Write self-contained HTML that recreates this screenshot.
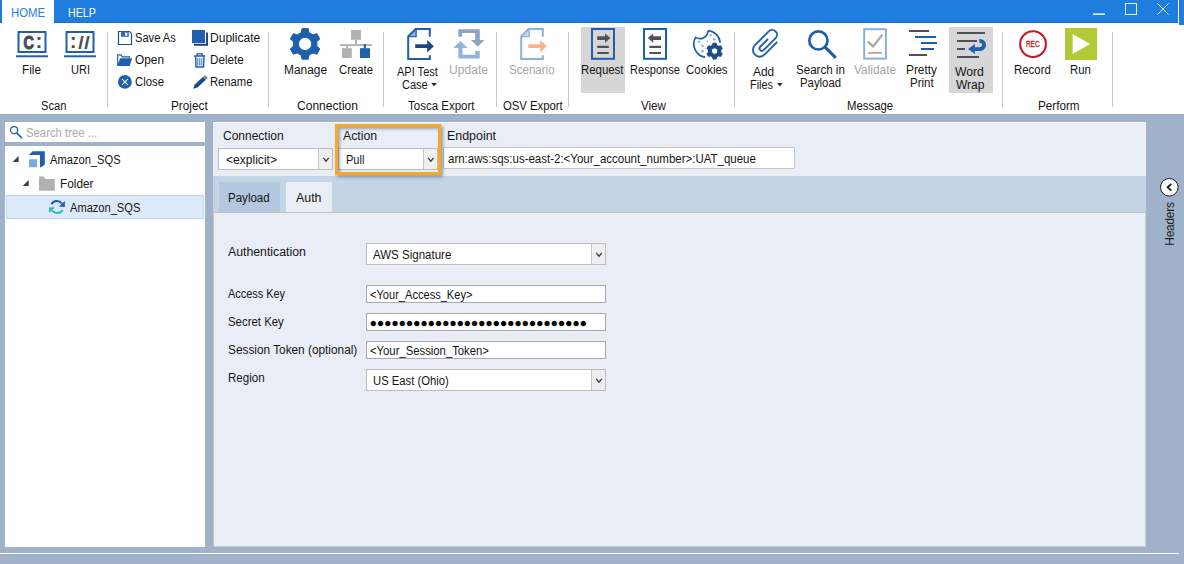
<!DOCTYPE html>
<html lang="en"><head><meta charset="utf-8"><title>API Scan</title>
<style>
html,body{margin:0;padding:0;}
body{width:1184px;height:564px;overflow:hidden;background:#a0b2c9;position:relative;font-family:"Liberation Sans",sans-serif;}
.abs{position:absolute;}
.t{position:absolute;white-space:pre;line-height:16px;font-family:"Liberation Sans",sans-serif;transform-origin:0 0;}
.box{position:absolute;box-sizing:border-box;}
.inp{position:absolute;box-sizing:border-box;background:#fff;border:1px solid #abadb3;}
.cbtn{position:absolute;box-sizing:border-box;background:#efefef;border-left:1px solid #c4c4c4;top:0;bottom:0;right:0;width:14px;}
.combo{border-color:#bdbdbd;}
svg{position:absolute;left:0;top:0;}
</style></head>
<body>
<div id="window-chrome">
<div class="box" style="left:0px;top:0px;width:1184px;height:23px;background:#1f7ddd;"></div>
<div class="box" style="left:0px;top:22px;width:1184px;height:1px;background:#1873d8;"></div>
<div class="box" style="left:2px;top:0px;width:52px;height:23px;background:#ffffff;"></div>
<div class="box" style="left:0px;top:23px;width:1184px;height:91px;background:#ffffff;"></div>
<div class="box" style="left:1179px;top:0px;width:5px;height:25px;background:#1f7ddd;"></div>
<div class="box" style="left:1178px;top:0px;width:1px;height:25px;background:#ffffff;"></div>
<div class="box" style="left:107px;top:32px;width:1px;height:75px;background:#c8c8c8;"></div>
<div class="box" style="left:268px;top:32px;width:1px;height:75px;background:#c8c8c8;"></div>
<div class="box" style="left:383px;top:32px;width:1px;height:75px;background:#c8c8c8;"></div>
<div class="box" style="left:496px;top:32px;width:1px;height:75px;background:#c8c8c8;"></div>
<div class="box" style="left:568px;top:32px;width:1px;height:75px;background:#c8c8c8;"></div>
<div class="box" style="left:734px;top:32px;width:1px;height:75px;background:#c8c8c8;"></div>
<div class="box" style="left:1002px;top:32px;width:1px;height:75px;background:#c8c8c8;"></div>
<div class="box" style="left:1112px;top:32px;width:1px;height:75px;background:#c8c8c8;"></div>
<div class="box" style="left:581px;top:27px;width:44px;height:66px;background:#d6d6d6;"></div>
<div class="box" style="left:949px;top:27px;width:44px;height:66px;background:#d6d6d6;"></div>
<div class="box" style="left:0px;top:114px;width:1184px;height:1px;background:#98abc5;"></div>
<div class="box" style="left:5px;top:122px;width:200px;height:20px;background:#ffffff;"></div>
<div class="box" style="left:5px;top:146px;width:200px;height:401px;background:#ffffff;"></div>
<div class="box" style="left:6px;top:195px;width:198px;height:24px;background:#dce9f9;border:1px solid #bcd5f2;"></div>
<div class="box" style="left:213px;top:122px;width:933px;height:425px;background:#e8edf6;"></div>
<div class="box" style="left:213px;top:122px;width:933px;height:1px;background:#f1f4fa;"></div>
<div class="box" style="left:1145px;top:122px;width:1px;height:54px;background:#f1f4fa;"></div>
<div class="box" style="left:213px;top:176px;width:933px;height:36px;background:#c3d4e7;"></div>
<div class="box" style="left:213px;top:212px;width:933px;height:335px;background:#e8edf6;border-left:1px solid #c2c2c2;border-top:1px solid #c2c2c2;border-bottom:1px solid #c6c6c6;border-right:1px solid #c4cfdf;"></div>
<div class="box" style="left:219px;top:182px;width:61px;height:30px;background:#b3c7df;"></div>
<div class="box" style="left:286px;top:182px;width:46px;height:30px;background:#e8edf6;"></div>
<div class="box" style="left:0px;top:553px;width:1179px;height:1px;background:#ffffff;"></div>
<div class="inp combo" style="left:218px;top:148px;width:115px;height:22px;"><div class="cbtn"></div></div>
<div class="inp combo" style="left:338px;top:148px;width:100px;height:22px;"><div class="cbtn"></div></div>
<div class="inp" style="left:443px;top:147px;width:352px;height:22px;border-color:#c3c3c3;border-radius:1px;"></div>
<div class="inp combo" style="left:366px;top:243px;width:240px;height:22px;"><div class="cbtn"></div></div>
<div class="inp" style="left:366px;top:285px;width:240px;height:18px;"></div>
<div class="inp" style="left:366px;top:313px;width:240px;height:18px;"></div>
<div class="inp" style="left:366px;top:341px;width:240px;height:18px;"></div>
<div class="inp combo" style="left:366px;top:369px;width:240px;height:22px;"><div class="cbtn"></div></div>
<div class="box" style="left:335px;top:124px;width:106px;height:51px;background:transparent;border:3px solid #f9a825;box-shadow:2px 2px 3px rgba(0,0,0,0.35), inset 2px 2px 3px rgba(60,70,90,0.45);"></div>
</div>
<svg id="icons" width="1184" height="564" viewBox="0 0 1184 564" aria-hidden="true">
<rect x="1093" y="13.3" width="12" height="1.7" fill="#dbe9fa"/>
<rect x="1125.5" y="3.5" width="11" height="11" stroke="#e6f0fc" stroke-width="1" fill="none"/>
<path d="M1157.5 3.5 L1168.5 14.5 M1168.5 3.5 L1157.5 14.5" stroke="#e6f0fc" stroke-width="1" fill="none"/>
<rect x="18.5" y="32" width="27" height="20" fill="none" stroke="#1f5fae" stroke-width="2"/>
<rect x="16" y="55.3" width="32" height="2" fill="#1f5fae"/>
<text transform="translate(23.4,49.4) scale(0.76,1)" font-family="Liberation Sans, sans-serif" font-weight="bold" font-size="19" fill="#4a4e54" stroke="#4a4e54" stroke-width="1.1">C</text>
<text transform="translate(35.6,47.6)" font-family="Liberation Sans, sans-serif" font-weight="bold" font-size="20.6" fill="#4a4e54">:</text>
<rect x="66.5" y="32" width="27" height="20" fill="none" stroke="#1f5fae" stroke-width="2"/>
<rect x="64" y="55.3" width="32" height="2" fill="#1f5fae"/>
<text transform="translate(69.8,47.6)" font-family="Liberation Sans, sans-serif" font-weight="bold" font-size="20.6" fill="#4a4e54">:</text>
<text transform="translate(78.2,49) scale(1.12,1)" font-family="Liberation Sans, sans-serif" font-weight="bold" font-size="17.6" fill="#4a4e54" stroke="#4a4e54" stroke-width="0.1" letter-spacing="0.5">//</text>
<path d="M118.5 31.5 H129.6 L131.5 33.4 V44.5 H118.5 Z" fill="#fff" stroke="#1d5196" stroke-width="1.2"/>
<rect x="121" y="31.4" width="7.8" height="5.4" fill="#2d6bbd"/>
<rect x="125.2" y="32.6" width="2.1" height="3.2" fill="#fff"/>
<path d="M117.7 65.6 V54.9 H121 L122.3 56.9 H129.5 V58.6" fill="none" stroke="#1f5fae" stroke-width="1.2"/>
<path d="M120.2 58.3 H132.1 L129.7 65.9 H117.1 Z" fill="#1f5fae"/>
<circle cx="124.9" cy="81.9" r="6.9" fill="#1f5fae"/>
<path d="M122 79 L127.9 84.9 M127.9 79 L122 84.9" stroke="#fff" stroke-width="1.05" fill="none"/>
<path d="M194 44.8 H207 V32.4" fill="none" stroke="#1b3f78" stroke-width="1.9"/>
<rect x="192" y="30" width="13" height="13" fill="#1f5fae"/>
<path d="M194 56 H205.3 M197 55.6 V53.8 H202.2 V55.6" fill="none" stroke="#1f5fae" stroke-width="1.3"/>
<path d="M195.7 56.5 L196 67 H203.6 L203.9 56.5" fill="none" stroke="#1f5fae" stroke-width="1.4"/>
<path d="M197.8 58.2 V65.6 M199.8 58.2 V65.6 M201.8 58.2 V65.6" fill="none" stroke="#1f5fae" stroke-width="0.9"/>
<path d="M193.2 88.8 L194.7 84.6 L203.1 76.8 L205.9 79.8 L197.5 87.6 Z" fill="#1c4b8c"/>
<path d="M203.1 76.8 L205.1 74.9 L207.9 77.9 L205.9 79.8 Z" fill="#8c8c8c"/>
<path d="M301.27 32.53 L302.02 28.61 L308.18 28.61 L308.93 32.53 L313.04 34.90 L316.80 33.58 L319.89 38.92 L316.86 41.53 L316.86 46.27 L319.89 48.88 L316.80 54.22 L313.04 52.90 L308.93 55.27 L308.18 59.19 L302.02 59.19 L301.27 55.27 L297.16 52.90 L293.40 54.22 L290.31 48.88 L293.34 46.27 L293.34 41.53 L290.31 38.92 L293.40 33.58 L297.16 34.90 Z M298.50 43.90 a6.6 6.6 0 1 0 13.2 0 a6.6 6.6 0 1 0 -13.2 0 Z" fill="#1f5fae" fill-rule="evenodd" stroke="#1f5fae" stroke-width="1" stroke-linejoin="round"/>
<rect x="351" y="30" width="10" height="9.8" fill="#b1b3b2"/>
<rect x="355" y="39.5" width="2" height="5" fill="#b1b3b2"/>
<rect x="340" y="44.1" width="32" height="1.9" fill="#b1b3b2"/>
<rect x="346.2" y="45.5" width="1.8" height="3" fill="#b1b3b2"/>
<rect x="342" y="48.2" width="9.8" height="9.8" fill="#b1b3b2"/>
<rect x="363.8" y="44.1" width="2.1" height="4.5" fill="#1f5fae"/>
<rect x="360" y="48.2" width="10" height="9.8" fill="#1f5fae"/>
<path d="M408.2 36.5 L415.79999999999995 28.6 V36.5 Z" fill="#8db4e2"/>
<path d="M429.8 36.7 V29 H415.59999999999997 L408.2 36.3 V58.9 H429.8 V55.2" fill="none" stroke="#1f5fae" stroke-width="2" stroke-linejoin="miter"/>
<path d="M408.2 36.6 H416.09999999999997 V28.6" fill="none" stroke="#1f5fae" stroke-width="1.4"/>
<path d="M415.2 44.3 H427.2 V40 L433.9 46.2 L427.2 52.4 V48.1 H415.2 Z" fill="#1a4a85"/>
<path d="M458.3 29.2 H479.8 V40 H484.5 L477.7 46.8 L470.9 40 H475.2 V33.1 H462.1 V36.7 H458.3 Z" fill="#8ca5c5"/>
<path d="M479.8 58.6 H458.3 V48.1 H453.2 L460.4 40.9 L467.6 48.1 H462.5 V54.8 H475.2 V50.9 H479.8 Z" fill="#8fb4e0"/>
<path d="M521.2 36.5 L528.8000000000001 28.6 V36.5 Z" fill="#c6d9f0"/>
<path d="M542.8000000000001 36.7 V29 H528.6000000000001 L521.2 36.3 V58.9 H542.8000000000001 V55.2" fill="none" stroke="#8fb0dd" stroke-width="2" stroke-linejoin="miter"/>
<path d="M521.2 36.6 H529.1000000000001 V28.6" fill="none" stroke="#8fb0dd" stroke-width="1.4"/>
<path d="M528.2 44.3 H540.2 V40 L546.9000000000001 46.2 L540.2 52.4 V48.1 H528.2 Z" fill="#f9b48c"/>
<rect x="592" y="29" width="22" height="29.8" fill="none" stroke="#1f5fae" stroke-width="2"/>
<path d="M597.2 36.2 H605 V33.5 L610.4 38.1 L605 42.7 V39.9 H597.2 Z" fill="#4f5156"/>
<path d="M597.2 46.9 H608.8 M597.2 53 H608.8" stroke="#4f5156" stroke-width="2.1" fill="none"/>
<rect x="644" y="29" width="22" height="29.8" fill="none" stroke="#1f5fae" stroke-width="2"/>
<path d="M661 36.2 H653.2 V33.5 L647.8 38.1 L653.2 42.7 V39.9 H661 Z" fill="#4f5156"/>
<path d="M649.4 46.9 H661 M649.4 53 H661" stroke="#4f5156" stroke-width="2.1" fill="none"/>
<path d="M708 30.7 A13.3 13.3 0 0 1 720.2 42.6 M705.2 57.2 A13.3 13.3 0 0 1 695.6 37.4 A8.1 8.1 0 0 0 708 30.7" fill="none" stroke="#1f5fae" stroke-width="1.7"/>
<circle cx="710.6" cy="35.1" r="1.2" fill="#8db4e2"/>
<circle cx="714.1" cy="39.3" r="1.3" fill="#8db4e2"/>
<circle cx="707.5" cy="41.4" r="0.8" fill="#8db4e2"/>
<circle cx="698.9" cy="41.8" r="1.2" fill="#8db4e2"/>
<circle cx="702.5" cy="45.8" r="1.3" fill="#8db4e2"/>
<circle cx="702.5" cy="51.2" r="1.3" fill="#8db4e2"/>
<circle cx="705.6" cy="48.3" r="0.6" fill="#8db4e2"/>
<path d="M712.59 45.13 L713.00 43.16 L716.20 43.16 L716.61 45.13 L718.77 46.37 L720.68 45.74 L722.28 48.52 L720.78 49.85 L720.78 52.35 L722.28 53.68 L720.68 56.46 L718.77 55.83 L716.61 57.07 L716.20 59.04 L713.00 59.04 L712.59 57.07 L710.43 55.83 L708.52 56.46 L706.92 53.68 L708.42 52.35 L708.42 49.85 L706.92 48.52 L708.52 45.74 L710.43 46.37 Z M711.30 51.10 a3.3 3.3 0 1 0 6.6 0 a3.3 3.3 0 1 0 -6.6 0 Z" fill="#1a4a85" fill-rule="evenodd" stroke="#1a4a85" stroke-width="1" stroke-linejoin="round"/>
<path d="M777.26 41.94 L764.50 54.70 A6.76 6.76 0 0 1 754.93 45.13 L768.73 31.34 A4.85 4.85 0 0 1 775.59 38.20 L763.64 50.14 A2.41 2.41 0 0 1 760.24 46.73 L767.95 39.02" fill="none" stroke="#1f5fae" stroke-width="1.9" stroke-linecap="butt"/>
<circle cx="818.4" cy="40.4" r="9.1" fill="none" stroke="#1f5fae" stroke-width="2.7"/>
<path d="M825.2 47.2 L835.8 57.8" stroke="#1f5fae" stroke-width="3.1" fill="none"/>
<rect x="864.2" y="29.2" width="21.7" height="29.4" fill="none" stroke="#8cb0dc" stroke-width="2"/>
<path d="M867.8 41.4 L873 46.4 L882.6 34.6" fill="none" stroke="#ababab" stroke-width="2.4"/>
<path d="M868.1 52.9 H881.9" stroke="#ababab" stroke-width="1.8" fill="none"/>
<path d="M908.9 31 H929.1 M908.9 55 H927" stroke="#4f5156" stroke-width="1.9" fill="none"/>
<path d="M915 37 H936.1 M920.9 43 H937 M920.9 49 H934" stroke="#1f5fae" stroke-width="1.9" fill="none"/>
<path d="M957 33 H985 M957 41 H977 M957 49 H965 M957 57 H979" stroke="#4f5156" stroke-width="2" fill="none"/>
<path d="M979.3 40.9 H980 A4.1 4.1 0 0 1 980 49.1 H974.5" fill="none" stroke="#1f5fae" stroke-width="3.9"/>
<path d="M968.1 48.9 L974.9 44.1 V54.1 Z" fill="#1f5fae"/>
<circle cx="1033.05" cy="44.1" r="12.9" fill="#fff" stroke="#c9151e" stroke-width="2.1"/>
<text x="1032.8" y="46.9" text-anchor="middle" font-family="Liberation Sans, sans-serif" font-size="8.5" fill="#c9151e" stroke="#c9151e" stroke-width="0.3" textLength="13.8" lengthAdjust="spacingAndGlyphs">REC</text>
<rect x="1065" y="28" width="32" height="32" fill="#b1c934"/>
<path d="M1072.7 33.9 L1090.2 44 L1072.7 54.1 Z" fill="#fff"/>
<circle cx="14.1" cy="130.1" r="3.6" fill="none" stroke="#1f5fae" stroke-width="1.25"/>
<path d="M16.5 132.7 L21.9 138.1" stroke="#1f5fae" stroke-width="1.6" fill="none"/>
<path d="M18.6 156 V161.9 H12.5 Z" fill="#3f3f3f"/>
<path d="M28.7 180 V185.9 H22.6 Z" fill="#3f3f3f"/>
<path d="M29 155 L32.6 151.2 H44.8 V164.4 L41 167.2 H40 V155 Z" fill="#1f5fae"/>
<rect x="29" y="159.2" width="8" height="8" fill="#7aa9e2"/>
<path d="M39 176.5 H43.6 L45.2 178.9 H54.8 V190.8 H39 Z" fill="#b1b1b1"/>
<path d="M51.5 204.2 A6.3 6.3 0 0 1 61.8 203.4" fill="none" stroke="#1f5fae" stroke-width="2"/>
<path d="M64.9 200.9 V206.9 L58.9 206.5 Z" fill="#1f5fae"/>
<path d="M62.6 209.9 A6.3 6.3 0 0 1 52.2 210.6" fill="none" stroke="#2bb5c3" stroke-width="2"/>
<path d="M49 213.1 V207.2 L55 207.5 Z" fill="#2bb5c3"/>
<path d="M323.2 157.9 L326 161.1 L328.8 157.9" fill="none" stroke="#3d3d3d" stroke-width="1.35"/>
<path d="M428.0 157.9 L430.8 161.1 L433.6 157.9" fill="none" stroke="#3d3d3d" stroke-width="1.35"/>
<path d="M596.2 252.9 L599 256.1 L601.8 252.9" fill="none" stroke="#3d3d3d" stroke-width="1.35"/>
<path d="M596.2 378.90000000000003 L599 382.1 L601.8 378.90000000000003" fill="none" stroke="#3d3d3d" stroke-width="1.35"/>
<circle cx="1169.3" cy="187.3" r="8.8" fill="#fff" stroke="#1e1e1e" stroke-width="1"/>
<path d="M1171.3 184 L1167.6 187.3 L1171.3 190.6" fill="none" stroke="#1e1e1e" stroke-width="1.8"/>
<path d="M431.2 82.9 H436.8 L434 86.5 Z" fill="#2b2b2b"/>
<path d="M777 82.9 H782.6 L779.8 86.5 Z" fill="#2b2b2b"/>
</svg>
<div id="labels">
<span class="t" id="t0" style="left:11.00px;top:5.00px;font-size:12px;color:#2b7de0;transform:scaleX(0.9481);">HOME</span>
<span class="t" id="t1" style="left:68.00px;top:5.00px;font-size:12px;color:#ffffff;transform:scaleX(0.8878);">HELP</span>
<span class="t" id="t2" style="left:22.00px;top:62.00px;font-size:12px;color:#151515;transform:scaleX(0.9791);">File</span>
<span class="t" id="t3" style="left:71.00px;top:62.00px;font-size:12px;color:#151515;transform:scaleX(0.9194);">URI</span>
<span class="t" id="t4" style="left:135.00px;top:30.00px;font-size:12px;color:#151515;transform:scaleX(0.9282);">Save As</span>
<span class="t" id="t5" style="left:135.00px;top:52.00px;font-size:12px;color:#151515;transform:scaleX(0.9900);">Open</span>
<span class="t" id="t6" style="left:135.00px;top:74.00px;font-size:12px;color:#151515;transform:scaleX(0.9466);">Close</span>
<span class="t" id="t7" style="left:210.00px;top:30.00px;font-size:12px;color:#151515;transform:scaleX(1.0039);">Duplicate</span>
<span class="t" id="t8" style="left:210.00px;top:52.00px;font-size:12px;color:#151515;transform:scaleX(0.9742);">Delete</span>
<span class="t" id="t9" style="left:210.00px;top:74.00px;font-size:12px;color:#151515;transform:scaleX(0.9359);">Rename</span>
<span class="t" id="t10" style="left:284.00px;top:62.00px;font-size:12px;color:#151515;transform:scaleX(0.9932);">Manage</span>
<span class="t" id="t11" style="left:339.00px;top:62.00px;font-size:12px;color:#151515;transform:scaleX(0.9450);">Create</span>
<span class="t" id="t12" style="left:397.00px;top:64.00px;font-size:12px;color:#151515;transform:scaleX(0.9182);">API Test</span>
<span class="t" id="t13" style="left:402.00px;top:77.00px;font-size:12px;color:#151515;transform:scaleX(0.9189);">Case</span>
<span class="t" id="t14" style="left:449.00px;top:62.00px;font-size:12px;color:#a6a6a6;transform:scaleX(1.0094);">Update</span>
<span class="t" id="t15" style="left:509.00px;top:62.00px;font-size:12px;color:#a6a6a6;transform:scaleX(0.9627);">Scenario</span>
<span class="t" id="t16" style="left:581.00px;top:62.00px;font-size:12px;color:#151515;transform:scaleX(0.9494);">Request</span>
<span class="t" id="t17" style="left:630.00px;top:62.00px;font-size:12px;color:#151515;transform:scaleX(0.9239);">Response</span>
<span class="t" id="t18" style="left:686.00px;top:62.00px;font-size:12px;color:#151515;transform:scaleX(0.9597);">Cookies</span>
<span class="t" id="t19" style="left:753.00px;top:64.00px;font-size:12px;color:#151515;transform:scaleX(0.9926);">Add</span>
<span class="t" id="t20" style="left:750.00px;top:77.00px;font-size:12px;color:#151515;transform:scaleX(0.9078);">Files</span>
<span class="t" id="t21" style="left:796.00px;top:62.00px;font-size:12px;color:#151515;transform:scaleX(0.9627);">Search in</span>
<span class="t" id="t22" style="left:800.00px;top:75.00px;font-size:12px;color:#151515;transform:scaleX(0.9455);">Payload</span>
<span class="t" id="t23" style="left:854.00px;top:62.00px;font-size:12px;color:#a6a6a6;transform:scaleX(0.9897);">Validate</span>
<span class="t" id="t24" style="left:906.00px;top:62.00px;font-size:12px;color:#151515;transform:scaleX(0.9891);">Pretty</span>
<span class="t" id="t25" style="left:910.00px;top:75.00px;font-size:12px;color:#151515;transform:scaleX(0.9580);">Print</span>
<span class="t" id="t26" style="left:955.00px;top:64.00px;font-size:12px;color:#151515;transform:scaleX(1.0151);">Word</span>
<span class="t" id="t27" style="left:956.00px;top:77.00px;font-size:12px;color:#151515;transform:scaleX(0.9983);">Wrap</span>
<span class="t" id="t28" style="left:1014.00px;top:62.00px;font-size:12px;color:#151515;transform:scaleX(0.9513);">Record</span>
<span class="t" id="t29" style="left:1070.00px;top:62.00px;font-size:12px;color:#151515;transform:scaleX(0.9482);">Run</span>
<span class="t" id="t30" style="left:41.00px;top:98.00px;font-size:12px;color:#151515;transform:scaleX(0.9279);">Scan</span>
<span class="t" id="t31" style="left:171.00px;top:98.00px;font-size:12px;color:#151515;transform:scaleX(0.9828);">Project</span>
<span class="t" id="t32" style="left:297.00px;top:98.00px;font-size:12px;color:#151515;transform:scaleX(1.0050);">Connection</span>
<span class="t" id="t33" style="left:408.00px;top:98.00px;font-size:12px;color:#151515;transform:scaleX(0.9582);">Tosca Export</span>
<span class="t" id="t34" style="left:503.00px;top:98.00px;font-size:12px;color:#151515;transform:scaleX(0.9428);">OSV Export</span>
<span class="t" id="t35" style="left:641.00px;top:98.00px;font-size:12px;color:#151515;transform:scaleX(0.9647);">View</span>
<span class="t" id="t36" style="left:847.00px;top:98.00px;font-size:12px;color:#151515;transform:scaleX(0.9470);">Message</span>
<span class="t" id="t37" style="left:1038.00px;top:98.00px;font-size:12px;color:#151515;transform:scaleX(0.9745);">Perform</span>
<span class="t" id="t38" style="left:26.00px;top:125.00px;font-size:12px;color:#a9a9a9;transform:scaleX(0.9445);">Search tree ...</span>
<span class="t" id="t39" style="left:50.00px;top:152.00px;font-size:12px;color:#151515;transform:scaleX(0.9294);">Amazon_SQS</span>
<span class="t" id="t40" style="left:60.00px;top:176.00px;font-size:12px;color:#151515;transform:scaleX(0.9825);">Folder</span>
<span class="t" id="t41" style="left:70.00px;top:200.00px;font-size:12px;color:#151515;transform:scaleX(0.9244);">Amazon_SQS</span>
<span class="t" id="t42" style="left:223.00px;top:128.00px;font-size:12px;color:#151515;transform:scaleX(0.9986);">Connection</span>
<span class="t" id="t43" style="left:343.00px;top:128.00px;font-size:12px;color:#151515;transform:scaleX(1.0261);">Action</span>
<span class="t" id="t44" style="left:447.00px;top:128.00px;font-size:12px;color:#151515;transform:scaleX(1.0355);">Endpoint</span>
<span class="t" id="t45" style="left:226.00px;top:152.00px;font-size:12px;color:#151515;transform:scaleX(1.0058);">&lt;explicit&gt;</span>
<span class="t" id="t46" style="left:346.00px;top:152.00px;font-size:12px;color:#151515;transform:scaleX(0.9186);">Pull</span>
<span class="t" id="t47" style="left:448.00px;top:151.00px;font-size:12px;color:#151515;transform:scaleX(0.9575);">arn:aws:sqs:us-east-2:&lt;Your_account_number&gt;:UAT_queue</span>
<span class="t" id="t48" style="left:228.00px;top:190.00px;font-size:12px;color:#151515;transform:scaleX(0.9612);">Payload</span>
<span class="t" id="t49" style="left:296.00px;top:190.00px;font-size:12px;color:#151515;transform:scaleX(1.0314);">Auth</span>
<span class="t" id="t50" style="left:228.00px;top:244.00px;font-size:12px;color:#151515;transform:scaleX(1.0243);">Authentication</span>
<span class="t" id="t51" style="left:228.00px;top:286.00px;font-size:12px;color:#151515;transform:scaleX(0.9094);">Access Key</span>
<span class="t" id="t52" style="left:228.00px;top:314.00px;font-size:12px;color:#151515;transform:scaleX(0.9503);">Secret Key</span>
<span class="t" id="t53" style="left:228.00px;top:342.00px;font-size:12px;color:#151515;transform:scaleX(0.9854);">Session Token (optional)</span>
<span class="t" id="t54" style="left:228.00px;top:370.00px;font-size:12px;color:#151515;transform:scaleX(0.9640);">Region</span>
<span class="t" id="t55" style="left:373.00px;top:247.00px;font-size:12px;color:#151515;transform:scaleX(0.9595);">AWS Signature</span>
<span class="t" id="t56" style="left:370.00px;top:287.00px;font-size:12px;color:#151515;transform:scaleX(0.9230);">&lt;Your_Access_Key&gt;</span>
<span class="t" id="t57" style="left:370.00px;top:343.00px;font-size:12px;color:#151515;transform:scaleX(0.9412);">&lt;Your_Session_Token&gt;</span>
<span class="t" id="t58" style="left:373.00px;top:373.00px;font-size:12px;color:#151515;transform:scaleX(0.9385);">US East (Ohio)</span>
<span class="t" id="dots" style="left:369.5px;top:315px;font-size:12.5px;letter-spacing:-0.31px;color:#000;line-height:16px;">●●●●●●●●●●●●●●●●●●●●●●●●●●●●●●</span>
<span class="t" id="hdr" style="left:1148.2px;top:216.3px;width:44px;height:16px;text-align:center;font-size:12px;letter-spacing:-0.3px;color:#1e1e1e;transform:rotate(-90deg);transform-origin:center;">Headers</span>
</div>
</body></html>
